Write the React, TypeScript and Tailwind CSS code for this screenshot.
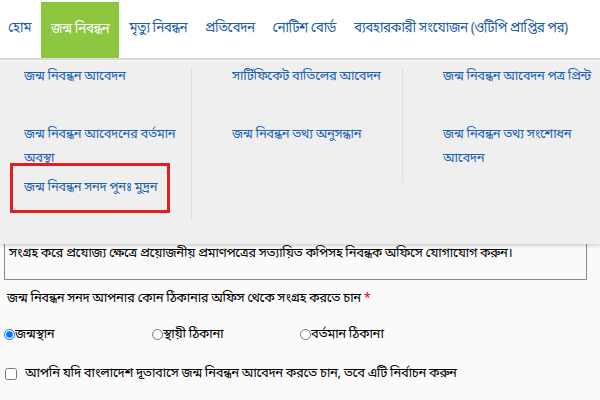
import React from "react";

const navItems = [
  { label: "হোম", active: false },
  { label: "জন্ম নিবন্ধন", active: true },
  { label: "মৃত্যু নিবন্ধন", active: false },
  { label: "প্রতিবেদন", active: false },
  { label: "নোটিশ বোর্ড", active: false },
  { label: "ব্যবহারকারী সংযোজন (ওটিপি প্রাপ্তির পর)", active: false },
];

const App = () => {
  return (
    <div
      className="relative w-[600px] h-[400px] overflow-hidden bg-[#fafafa] text-black"
      style={{ fontFamily: '"Noto Sans Bengali", "Noto Sans", "DejaVu Sans", sans-serif' }}
    >
      {/* top menu */}
      <nav className="flex items-stretch gap-[2px] h-[60px] bg-white border-b-2 border-[#d9d9d9] whitespace-nowrap tracking-[-0.5px]">
        {navItems.map((item) => (
          <div
            key={item.label}
            className={
              item.active
                ? "flex items-center px-[10px] mt-[2px] bg-[#8dc63f] text-white text-[13.5px]"
                : "flex items-center px-[8px] text-[#1f5fa8] text-[13.5px]"
            }
          >
            {item.label}
          </div>
        ))}
      </nav>

      {/* page content under the dropdown */}
      <div className="px-[4px] pt-[174px] text-[13px] tracking-[-0.35px]">
        <div className="border border-[#8a8a8a] border-t-0 w-[583px] h-[46px] flex items-end pb-[16px] px-[4px] whitespace-nowrap">
          সংগ্রহ করে প্রযোজ্য ক্ষেত্রে প্রয়োজনীয় প্রমাণপত্রের সত্যায়িত কপিসহ নিবন্ধক অফিসে যোগাযোগ করুন।
        </div>
        <p className="mt-[9px] ml-[3px]">
          জন্ম নিবন্ধন সনদ আপনার কোন ঠিকানার অফিস থেকে সংগ্রহ করতে চান{" "}
          <span className="text-red-600">*</span>
        </p>
        <div className="flex mt-[16px]">
          <label className="flex items-center w-[148px]">
            <input type="radio" name="addr" defaultChecked className="w-[11px] h-[11px] m-0" />
            জন্মস্থান
          </label>
          <label className="flex items-center w-[148px]">
            <input type="radio" name="addr" className="w-[11px] h-[11px] m-0" />
            স্থায়ী ঠিকানা
          </label>
          <label className="flex items-center">
            <input type="radio" name="addr" className="w-[11px] h-[11px] m-0" />
            বর্তমান ঠিকানা
          </label>
        </div>
        <label className="flex items-center gap-[8px] mt-[20px] ml-[1px]">
          <input type="checkbox" className="w-[12px] h-[12px] m-0" />
          আপনি যদি বাংলাদেশ দূতাবাসে জন্ম নিবন্ধন আবেদন করতে চান, তবে এটি নির্বাচন করুন
        </label>
      </div>

      {/* dropdown panel */}
      <div className="absolute left-0 top-[61px] w-[600px] h-[183px] bg-[#efefef] shadow-[0_2px_3px_rgba(0,0,0,0.15)] grid grid-cols-[192px_211px_197px] text-[13px] tracking-[-0.35px] text-[#1e63b0]">
        <div className="flex flex-col pt-[4px] pl-[24px] pr-[8px] border-r border-[#dedede] mt-[7px] mb-[24px]">
          <div className="h-[58px] -mt-[7px] leading-[24px]">জন্ম নিবন্ধন আবেদন</div>
          <div className="h-[44px] leading-[24px]">জন্ম নিবন্ধন আবেদনের বর্তমান অবস্থা</div>
          <div className="-ml-[14px] -mt-[4px] w-[160px] h-[50px] border-[3px] border-[#e1201f] flex items-center pl-[11px] whitespace-nowrap">
            জন্ম নিবন্ধন সনদ পুনঃ মুদ্রন
          </div>
        </div>
        <div className="flex flex-col pt-[4px] pl-[40px] pr-[8px] border-r border-[#dedede] mt-[7px] mb-[62px]">
          <div className="h-[58px] -mt-[7px] leading-[24px] whitespace-nowrap">সার্টিফিকেট বাতিলের আবেদন</div>
          <div className="leading-[24px] whitespace-nowrap">জন্ম নিবন্ধন তথ্য অনুসন্ধান</div>
        </div>
        <div className="flex flex-col pt-[4px] pl-[40px] pr-[14px]">
          <div className="h-[58px] leading-[24px] whitespace-nowrap">জন্ম নিবন্ধন আবেদন পত্র প্রিন্ট</div>
          <div className="leading-[24px]">জন্ম নিবন্ধন তথ্য সংশোধন আবেদন</div>
        </div>
      </div>
    </div>
  );
};

export default App;
